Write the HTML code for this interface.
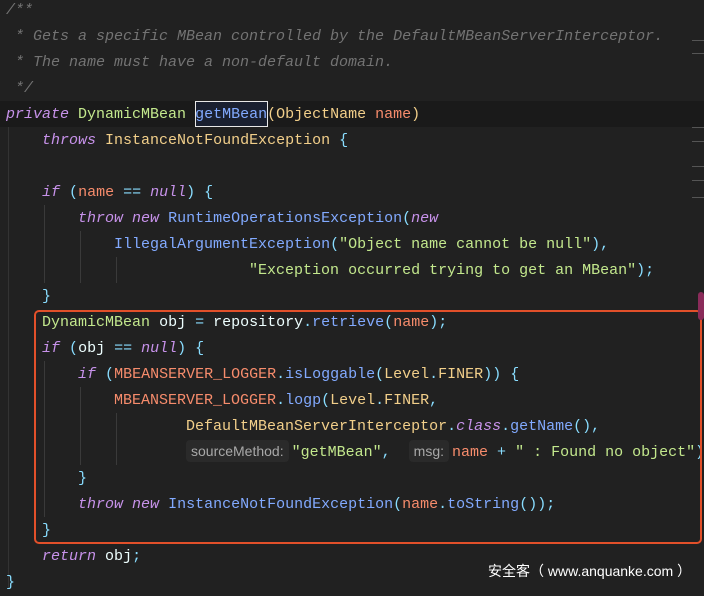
<!DOCTYPE html>
<html><head><meta charset="utf-8"><style>
html,body{margin:0;padding:0;}
body{width:704px;height:589px;background:#212121;position:relative;overflow:hidden;font-family:"Liberation Mono",monospace;font-size:15px;}
.l{position:absolute;left:6px;height:26px;line-height:26px;white-space:pre;color:#d4d4d4;}
.c{color:#737373;font-style:italic;}
.k{color:#c792ea;font-style:italic;}
.t{color:#c3e88d;}
.y{color:#f2cf8a;}
.f{color:#82aaff;}
.p{color:#f78c6c;}
.s{color:#c3e88d;}
.o{color:#89ddff;}
.w{color:#eeffff;}
.g{position:absolute;width:1px;background:#3a3a3a;}
.hint{display:inline-block;font-family:"Liberation Sans",sans-serif;font-size:14px;color:#a8a8a8;background:#2a2a2a;border-radius:4px;padding:0 5px;line-height:22px;margin-right:3px;}
.d{position:absolute;left:692px;width:12px;height:1px;background:#555;}
#w{position:absolute;left:0;top:1px;width:704px;height:589px;}
</style></head><body>
<div style="position:absolute;left:0;top:101px;width:704px;height:26px;background:#1a1a1a"></div>
<div style="position:absolute;left:195px;top:101px;width:71px;height:24px;border:1px solid #e8e8e8;background:#1a2030"></div>
<div class="g" style="left:8px;top:127px;height:462px;background:#333"></div>
<div class="g" style="left:44px;top:205px;height:78px"></div>
<div class="g" style="left:80px;top:231px;height:52px"></div>
<div class="g" style="left:116px;top:257px;height:26px"></div>
<div class="g" style="left:44px;top:361px;height:156px"></div>
<div class="g" style="left:80px;top:387px;height:78px"></div>
<div class="g" style="left:116px;top:413px;height:52px"></div>
<div id="w">
<div class="l c" style="top:-3px">/**</div>
<div class="l c" style="top:23px"> * Gets a specific MBean controlled by the DefaultMBeanServerInterceptor.</div>
<div class="l c" style="top:49px"> * The name must have a non-default domain.</div>
<div class="l c" style="top:75px"> */</div>
<div class="l" style="top:101px"><span class="k">private</span> <span class="t">DynamicMBean</span> <span class="f">getMBean</span><span class="y">(</span><span class="y">ObjectName</span> <span class="p">name</span><span class="y">)</span></div>
<div class="l" style="top:127px">    <span class="k">throws</span> <span class="y">InstanceNotFoundException</span> <span class="o">{</span></div>
<div class="l" style="top:179px">    <span class="k">if</span> <span class="o">(</span><span class="p">name</span> <span class="o">==</span> <span class="k">null</span><span class="o">)</span> <span class="o">{</span></div>
<div class="l" style="top:205px">        <span class="k">throw</span> <span class="k">new</span> <span class="f">RuntimeOperationsException</span><span class="o">(</span><span class="k">new</span></div>
<div class="l" style="top:231px">            <span class="f">IllegalArgumentException</span><span class="o">(</span><span class="s">"Object name cannot be null"</span><span class="o">),</span></div>
<div class="l" style="top:257px">                           <span class="s">"Exception occurred trying to get an MBean"</span><span class="o">);</span></div>
<div class="l" style="top:283px">    <span class="o">}</span></div>
<div class="l" style="top:309px">    <span class="t">DynamicMBean</span> <span class="w">obj</span> <span class="o">=</span> <span class="w">repository</span><span class="o">.</span><span class="f">retrieve</span><span class="o">(</span><span class="p">name</span><span class="o">);</span></div>
<div class="l" style="top:335px">    <span class="k">if</span> <span class="o">(</span><span class="w">obj</span> <span class="o">==</span> <span class="k">null</span><span class="o">)</span> <span class="o">{</span></div>
<div class="l" style="top:361px">        <span class="k">if</span> <span class="o">(</span><span class="p">MBEANSERVER_LOGGER</span><span class="o">.</span><span class="f">isLoggable</span><span class="o">(</span><span class="y">Level</span><span class="o">.</span><span class="y">FINER</span><span class="o">))</span> <span class="o">{</span></div>
<div class="l" style="top:387px">            <span class="p">MBEANSERVER_LOGGER</span><span class="o">.</span><span class="f">logp</span><span class="o">(</span><span class="y">Level</span><span class="o">.</span><span class="y">FINER</span><span class="o">,</span></div>
<div class="l" style="top:413px">                    <span class="y">DefaultMBeanServerInterceptor</span><span class="o">.</span><span class="k">class</span><span class="o">.</span><span class="f">getName</span><span class="o">(),</span></div>
<div class="l" style="top:439px;left:186px"><span class="hint">sourceMethod:</span><span class="s">"getMBean"</span><span class="o">,</span>  <span class="hint">msg:</span><span class="p">name</span> <span class="o">+</span> <span class="s">" : Found no object"</span><span class="o">)</span></div>
<div class="l" style="top:465px">        <span class="o">}</span></div>
<div class="l" style="top:491px">        <span class="k">throw</span> <span class="k">new</span> <span class="f">InstanceNotFoundException</span><span class="o">(</span><span class="p">name</span><span class="o">.</span><span class="f">toString</span><span class="o">());</span></div>
<div class="l" style="top:517px">    <span class="o">}</span></div>
<div class="l" style="top:543px">    <span class="k">return</span> <span class="w">obj</span><span class="o">;</span></div>
<div class="l" style="top:569px"><span class="o">}</span></div>
</div>
<div style="position:absolute;left:34px;top:310px;width:664px;height:230px;border:2.5px solid #e2502a;border-radius:5px"></div>

<div class="d" style="top:40px"></div><div class="d" style="top:53px"></div>
<div class="d" style="top:127px"></div><div class="d" style="top:141px"></div>
<div class="d" style="top:166px"></div><div class="d" style="top:180px"></div>
<div class="d" style="top:197px"></div>
<div style="position:absolute;left:698px;top:292px;width:6px;height:28px;background:#8a2b5a;border-radius:3px"></div>

<div style="position:absolute;left:488px;top:561px;font-family:'Liberation Sans','Noto Sans CJK SC',sans-serif;font-size:14px;color:#fff;white-space:pre">安全客（ www.anquanke.com ）</div>
</body></html>
